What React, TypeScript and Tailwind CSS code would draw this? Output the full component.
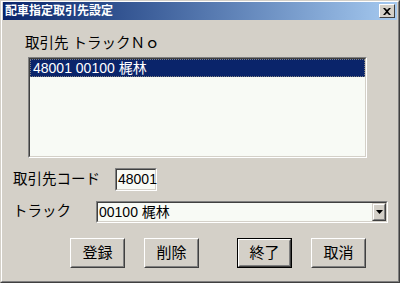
import React from "react";

const font = { fontFamily: '"Liberation Sans", "Noto Sans CJK JP", sans-serif' };

function Btn({ label, def }: { label: string; def?: boolean }) {
  const inner = (
    <div className="w-full h-full border border-t-white border-l-white border-b-[#404040] border-r-[#404040]">
      <div className="w-full h-full border border-t-[#d4d0c8] border-l-[#d4d0c8] border-b-[#808080] border-r-[#808080] flex items-center justify-center text-[15px] text-black bg-[#d4d0c8]">
        {label}
      </div>
    </div>
  );
  return (
    <div className={"w-[55px] h-[30px] " + (def ? "border border-black" : "")}>{inner}</div>
  );
}

export default function App() {
  return (
    <div style={font} className="w-[400px] h-[283px] bg-[#d4d0c8] overflow-hidden">
      <div className="w-[400px] h-[283px] border border-t-[#d4d0c8] border-l-[#d4d0c8] border-b-[#404040] border-r-[#404040]">
        <div className="w-full h-full border border-t-white border-l-white border-b-[#808080] border-r-[#808080] flex flex-col">
          {/* title bar */}
          <div className="mx-[1px] mt-0 h-[18px] flex items-center justify-between bg-gradient-to-r from-[#0a246a] to-[#a6caf0] pl-[2px] pr-[2px]">
            <span className="text-white font-bold text-[12px] leading-none tracking-[0px]">配車指定取引先設定</span>
            <div className="w-[16px] h-[14px] bg-[#d4d0c8] border border-t-white border-l-white border-b-[#404040] border-r-[#404040] flex items-center justify-center">
              <svg width="8" height="7" viewBox="0 0 8 7">
                <path d="M0 0 L2 0 L4 2 L6 0 L8 0 L5 3.5 L8 7 L6 7 L4 5 L2 7 L0 7 L3 3.5 Z" fill="#000" />
              </svg>
            </div>
          </div>
          {/* label */}
          <div className="mt-[14px] ml-[23px] h-[18px] flex items-center text-[14.5px] text-black leading-none">
            取引先 トラックＮｏ
          </div>
          {/* listbox */}
          <div className="mt-[5px] ml-[26px] w-[339px] h-[101px] border border-t-[#808080] border-l-[#808080] border-b-white border-r-white">
            <div className="w-full h-full border border-t-[#404040] border-l-[#404040] border-b-[#d4d0c8] border-r-[#d4d0c8] bg-[#f8faf5]">
              <div className="h-[18px] bg-[#0a246a] text-white text-[14px] flex items-center pl-[3px] outline-dotted outline-1 outline-[#808080] -outline-offset-1">
                48001 00100 梶林
              </div>
            </div>
          </div>
          {/* code row */}
          <div className="mt-[10px] h-[23px] flex items-center">
            <span className="ml-[11px] w-[102px] text-[14.5px] text-black">取引先コード</span>
            <div className="w-[42px] h-[23px] border border-t-[#808080] border-l-[#808080] border-b-white border-r-white">
              <div className="w-full h-full border border-t-[#404040] border-l-[#404040] border-b-[#d4d0c8] border-r-[#d4d0c8] bg-[#f8faf5] flex items-center pl-[1px] text-[14px] text-black">
                48001
              </div>
            </div>
          </div>
          {/* truck row */}
          <div className="mt-[10px] h-[22px] flex items-center">
            <span className="ml-[11px] w-[83px] text-[14.5px] text-black">トラック</span>
            <div className="w-[292px] h-[22px] border border-t-[#808080] border-l-[#808080] border-b-white border-r-white">
              <div className="w-full h-full border border-t-[#404040] border-l-[#404040] border-b-[#d4d0c8] border-r-[#d4d0c8] bg-[#f8faf5] flex items-center">
                <span className="flex-1 pl-[1px] text-[14px] text-black">00100 梶林</span>
                <div className="w-[14px] h-full border border-t-[#d4d0c8] border-l-[#d4d0c8] border-b-[#404040] border-r-[#404040]">
                  <div className="w-full h-full bg-[#d4d0c8] border border-t-white border-l-white border-b-[#808080] border-r-[#808080] flex items-center justify-center">
                    <svg width="7" height="4" viewBox="0 0 7 4">
                      <path d="M0 0 L7 0 L3.5 4 Z" fill="#000" />
                    </svg>
                  </div>
                </div>
              </div>
            </div>
          </div>
          {/* buttons */}
          <div className="mt-[15px] flex">
            <div className="ml-[68px]"><Btn label="登録" /></div>
            <div className="ml-[19px]"><Btn label="削除" /></div>
            <div className="ml-[38px]"><Btn label="終了" def /></div>
            <div className="ml-[19px]"><Btn label="取消" /></div>
          </div>
        </div>
      </div>
    </div>
  );
}
